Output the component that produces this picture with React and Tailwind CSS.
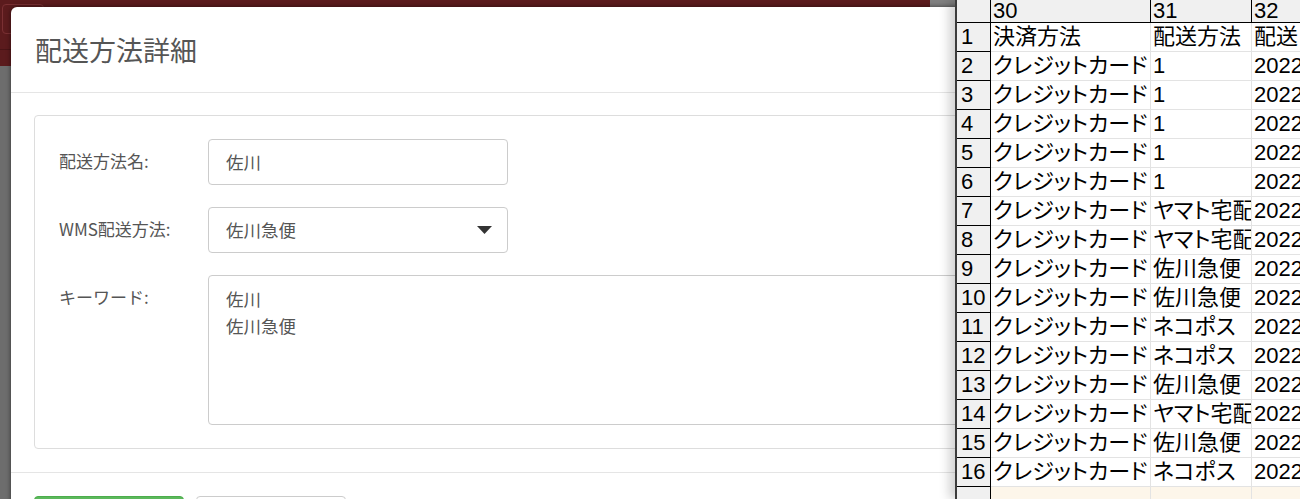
import React from 'react';

const sheetRows = [
  ['決済方法', '配送方法', '配送日時'],
  ['クレジットカード', '1', '2022/01/05'],
  ['クレジットカード', '1', '2022/01/05'],
  ['クレジットカード', '1', '2022/01/05'],
  ['クレジットカード', '1', '2022/01/06'],
  ['クレジットカード', '1', '2022/01/06'],
  ['クレジットカード', 'ヤマト宅配便', '2022/01/06'],
  ['クレジットカード', 'ヤマト宅配便', '2022/01/07'],
  ['クレジットカード', '佐川急便', '2022/01/07'],
  ['クレジットカード', '佐川急便', '2022/01/07'],
  ['クレジットカード', 'ネコポス', '2022/01/08'],
  ['クレジットカード', 'ネコポス', '2022/01/08'],
  ['クレジットカード', '佐川急便', '2022/01/08'],
  ['クレジットカード', 'ヤマト宅配便', '2022/01/09'],
  ['クレジットカード', '佐川急便', '2022/01/09'],
  ['クレジットカード', 'ネコポス', '2022/01/10'],
];

function Field({ label, children }) {
  return (
    <div className="flex items-start">
      <div className="w-[149px] shrink-0 pt-[11px] leading-[22px] text-[17px] text-[#555]">{label}</div>
      {children}
    </div>
  );
}

function Modal() {
  return (
    <div className="absolute left-[11px] top-[7px] w-[1010px] bg-white rounded-tl-[6px] shadow-[0_0_5px_rgba(0,0,0,0.55)] font-['Noto_Sans_CJK_JP',sans-serif]">
      {/* Header */}
      <div className="h-[86px] flex items-center px-[24px] border-b border-[#e5e5e5]">
        <h4 className="text-[27px] text-[#555] font-normal leading-none">配送方法詳細</h4>
      </div>

      {/* Body */}
      <div className="px-[23px] pt-[22px] pb-[23px] border-b border-[#e5e5e5]">
        <div className="border border-[#dddddd] rounded-[4px] px-[24px] pt-[23px] pb-[23px] flex flex-col gap-[22px]">
          <Field label="配送方法名:">
            <div className="w-[300px] h-[46px] border border-[#cccccc] rounded-[4px] px-[17px] flex items-center text-[17.5px] text-[#555]">
              佐川
            </div>
          </Field>
          <Field label="WMS配送方法:">
            <div className="w-[300px] h-[46px] border border-[#cccccc] rounded-[4px] pl-[17px] pr-[15px] flex items-center justify-between text-[17.5px] text-[#555]">
              <span>佐川急便</span>
              <svg width="15" height="8" viewBox="0 0 15 8">
                <path d="M0 0 L15 0 L7.5 8 Z" fill="#333" />
              </svg>
            </div>
          </Field>
          <Field label="キーワード:">
            <div className="w-[800px] h-[150px] border border-[#cccccc] rounded-[4px] px-[17px] pt-[9px] text-[17.5px] leading-[27px] text-[#555] whitespace-pre-line">
              {'佐川\n佐川急便'}
            </div>
          </Field>
        </div>
      </div>

      {/* Footer */}
      <div className="px-[23px] pt-[23px] pb-[20px] flex gap-[12px]">
        <button className="w-[150px] h-[46px] rounded-[4px] bg-[#5cb85c] border border-[#4cae4c] text-white text-[17px]">保存</button>
        <button className="w-[150px] h-[46px] rounded-[4px] bg-white border border-[#cccccc] text-[#333] text-[17px]">キャンセル</button>
      </div>
    </div>
  );
}

function Cell({ children, last }) {
  return (
    <div className={`h-[29px] border-b border-[#e3e3e3] pl-[2px] leading-[28px] overflow-hidden ${last ? '' : 'border-r'}`}>
      <span>{children}</span>
    </div>
  );
}

function Sheet() {
  const head = 'bg-[#f0f0f0] border-black';
  return (
    <div className="relative z-10 flex-1 h-full bg-white border-l-2 border-[#3c3c3c] shadow-[-6px_0_10px_rgba(0,0,0,0.18)] overflow-hidden font-['Liberation_Sans','Noto_Sans_CJK_JP',sans-serif] text-[22px] text-black [font-feature-settings:'palt']">
      <div className="grid grid-cols-[34px_160px_101px_1fr] whitespace-nowrap">
        {/* column header */}
        <div className={`h-[23px] border-r border-b ${head}`} />
        <div className={`h-[23px] border-r border-b ${head} pl-[2px] leading-[22px]`}>30</div>
        <div className={`h-[23px] border-r border-b ${head} pl-[2px] leading-[22px]`}>31</div>
        <div className={`h-[23px] border-b ${head} pl-[2px] leading-[22px]`}>32</div>

        {sheetRows.map((r, i) => (
          <React.Fragment key={i}>
            <div className={`h-[29px] border-r border-b ${head} pl-[4px] leading-[28px]`}>{i + 1}</div>
            <Cell>{r[0]}</Cell>
            <Cell>{r[1]}</Cell>
            <Cell last>{r[2]}</Cell>
          </React.Fragment>
        ))}

        <div className={`h-[29px] border-r ${head}`} />
        <div className="h-[29px] bg-[#fdf6ea] border-r border-[#e3e3e3]" />
        <div className="h-[29px] bg-[#fdf6ea] border-r border-[#e3e3e3]" />
        <div className="h-[29px] bg-[#fdf6ea]" />
      </div>
    </div>
  );
}

export default function App() {
  return (
    <div className="flex w-[1300px] h-[499px] overflow-hidden">
      {/* page behind the modal */}
      <div className="relative w-[955px] shrink-0 h-full flex overflow-hidden">
        <div className="flex-1 flex flex-col bg-[#6d6d6d]">
          <div className="h-[50px] bg-[#5b1b1d] border-b border-[#4a1416] px-[2px] pt-[4px]">
            <div className="w-[42px] h-[30px] border border-[#7a3033] rounded-[4px]" />
          </div>
          <div className="h-[16px] bg-[#5b1b1d]" />
          <div className="flex-1" />
        </div>
        <div className="w-[25px] bg-[#808080]" />
        <Modal />
      </div>
      <Sheet />
    </div>
  );
}
